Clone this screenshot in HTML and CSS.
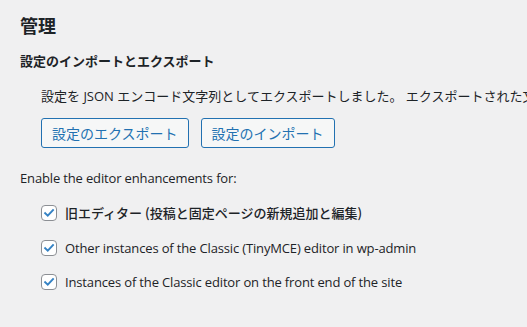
FILE: index.html
```html
<!DOCTYPE html>
<html lang="ja">
<head>
<meta charset="utf-8">
<link rel="stylesheet" href="styles.css">
</head>
<body>
<div class="wrap">
  <h2 class="title">管理</h2>
  <h3 class="section">設定のインポートとエクスポート</h3>
  <p class="desc">設定を JSON エンコード文字列としてエクスポートしました。 エクスポートされた文字列をコピーして保存してください。</p>
  <div class="buttons">
    <button class="btn" type="button">設定のエクスポート</button>
    <button class="btn" type="button">設定のインポート</button>
  </div>
  <p class="lead">Enable the editor enhancements for:</p>
  <ul class="options">
    <li class="option"><span class="check"><svg viewBox="0 0 16 16" width="16" height="16"><path d="M3.6 8.2 L6.6 11.1 L12.6 4.6" fill="none" stroke="#3582c4" stroke-width="2.2" stroke-linecap="square"/></svg></span><span class="label label-ja">旧エディター (投稿と固定ページの新規追加と編集)</span></li>
    <li class="option"><span class="check"><svg viewBox="0 0 16 16" width="16" height="16"><path d="M3.6 8.2 L6.6 11.1 L12.6 4.6" fill="none" stroke="#3582c4" stroke-width="2.2" stroke-linecap="square"/></svg></span><span class="label">Other instances of the Classic (TinyMCE) editor in wp-admin</span></li>
    <li class="option"><span class="check"><svg viewBox="0 0 16 16" width="16" height="16"><path d="M3.6 8.2 L6.6 11.1 L12.6 4.6" fill="none" stroke="#3582c4" stroke-width="2.2" stroke-linecap="square"/></svg></span><span class="label">Instances of the Classic editor on the front end of the site</span></li>
  </ul>
</div>
</body>
</html>
```
FILE: styles.css
```css
html, body {
  margin: 0;
  padding: 0;
  background: #f0f0f1;
}
body {
  font-family: "Open Sans", "Noto Sans CJK JP", sans-serif;
  font-size: 13px;
  color: #1d2327;
  overflow: hidden;
  width: 527px;
  height: 327px;
}
.wrap {
  padding-left: 20px;
  white-space: nowrap;
}
.title {
  margin: 13px 0 0;
  font-size: 18px;
  line-height: 24px;
  font-weight: 600;
  font-family: "Noto Sans CJK JP", sans-serif;
}
.section {
  margin: 13.5px 0 0;
  font-size: 13px;
  line-height: 20px;
  font-weight: 700;
  font-family: "Noto Sans CJK JP", sans-serif;
}
.desc {
  margin: 15px 0 0;
  padding-left: 21px;
  line-height: 20px;
  overflow: hidden;
  font-family: "Open Sans", "Noto Sans CJK JP", sans-serif;
}
.buttons {
  display: flex;
  gap: 12px;
  margin: 12.5px 0 0 21px;
}
.btn {
  box-sizing: border-box;
  height: 30px;
  padding: 0 10px;
  border: 1px solid #2271b1;
  border-radius: 3px;
  background: #f6f7f7;
  color: #2271b1;
  font-family: "Noto Sans CJK JP", sans-serif;
  font-size: 14px;
  line-height: 28px;
}
.lead {
  margin: 20px 0 0;
  line-height: 20px;
  letter-spacing: -0.15px;
}
.options {
  list-style: none;
  margin: 13px 0 0;
  padding: 0 0 0 21px;
  display: flex;
  flex-direction: column;
  gap: 10.5px;
}
.option {
  display: flex;
  align-items: center;
  gap: 8px;
  height: 24px;
}
.check {
  box-sizing: border-box;
  flex: none;
  width: 16px;
  height: 16px;
  border: 1px solid #8c8f94;
  border-radius: 4px;
  background: #fff;
  display: flex;
  align-items: center;
  justify-content: center;
}
.check svg {
  display: block;
  width: 14px;
  height: 14px;
}
.label {
  line-height: 24px;
  letter-spacing: -0.15px;
}
.label-ja {
  font-family: "Noto Sans CJK JP", sans-serif;
  font-weight: 500;
  letter-spacing: 0;
}
```
